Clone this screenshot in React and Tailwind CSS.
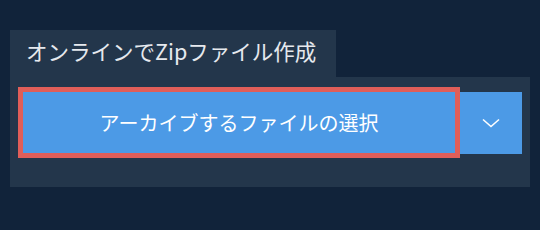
export default function App() {
  return (
    <div
      className="w-[540px] h-[230px] bg-[#11233a] pt-[30px] pl-[10px]"
      style={{ fontFamily: '"Noto Sans CJK JP", "Noto Sans", sans-serif' }}
    >
      {/* タブ */}
      <div className="w-[326px] h-[47px] bg-[#23364b] flex items-center pl-[16px] pb-[6px] text-[21.5px] leading-none text-[#e6e9ee]">
        オンラインでZipファイル作成
      </div>

      {/* パネル */}
      <div className="w-[520px] h-[110px] bg-[#23364b] pt-[15px] pl-[13px] pr-[8px]">
        <div className="flex items-start">
          <button className="w-[432px] h-[61px] bg-[#4c9ae6] outline-[5px] outline-solid outline-[#e05e59] text-white text-[20px] flex items-center justify-center">
            アーカイブするファイルの選択
          </button>
          <button className="ml-[5px] w-[62px] h-[62px] bg-[#4c9ae6] flex items-center justify-center">
            <svg width="18" height="10" viewBox="0 0 18 10" fill="none">
              <path d="M1 1.5 L9 8.5 L17 1.5" stroke="white" strokeWidth="1.6" />
            </svg>
          </button>
        </div>
      </div>
    </div>
  );
}
